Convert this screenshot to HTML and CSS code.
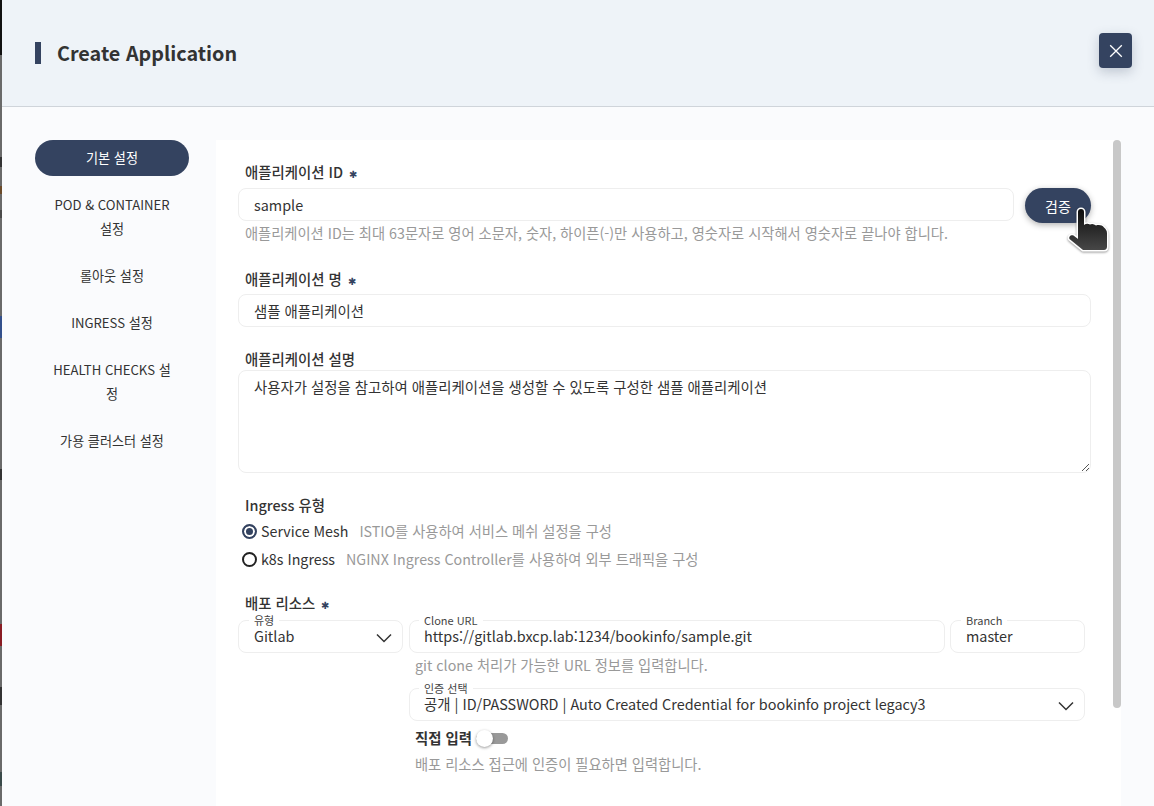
FILE: index.html
```html
<!DOCTYPE html>
<html lang="ko">
<head>
<meta charset="utf-8">
<title>Create Application</title>
<link rel="stylesheet" href="styles.css">
</head>
<body>
<div class="backdrop"></div>
<main class="dialog">
  <header class="dialog-head">
    <h1 class="title">Create Application</h1>
    <button class="close" type="button" aria-label="close">
      <svg width="14" height="14" viewBox="0 0 14 14"><path d="M1.2 1.2l11.6 11.6M12.8 1.2L1.2 12.8" fill="none" stroke="#fff" stroke-width="1.3"/></svg>
    </button>
  </header>
  <div class="dialog-body">
    <nav class="side">
      <a class="side-item active">기본 설정</a>
      <a class="side-item">POD &amp; CONTAINER 설정</a>
      <a class="side-item">롤아웃 설정</a>
      <a class="side-item">INGRESS 설정</a>
      <a class="side-item">HEALTH CHECKS 설정</a>
      <a class="side-item">가용 클러스터 설정</a>
    </nav>
    <section class="panel">
      <div class="form">
        <label class="lbl lbl-first">애플리케이션 ID <span class="req">✱</span></label>
        <div class="row-id">
          <div class="field grow">sample</div>
          <div class="verify-wrap">
            <button class="verify" type="button">검증</button>
            <svg class="cursor" width="50" height="52" viewBox="0 0 50 52">
              <defs><linearGradient id="hand" x1="0" y1="0" x2="0" y2="1"><stop offset="0" stop-color="#0c0c0c"/><stop offset="1" stop-color="#474747"/></linearGradient></defs>
              <path d="M16 7a3 3 0 0 1 6 0v13c2-1.500 4-1.500 6-.5 2-1 4-.5 6 1 3-1 6-.5 8 2 2 2 3 3 3 6v13c0 2-1 3.500-3 3.500H21L7.500 34c-1-2 1-4.500 4-3.500L16 34z" fill="url(#hand)" stroke="#fff" stroke-width="3" stroke-linejoin="round" paint-order="stroke"/>
            </svg>
          </div>
        </div>
        <p class="hint hint-id">애플리케이션 ID는 최대 63문자로 영어 소문자, 숫자, 하이픈(-)만 사용하고, 영숫자로 시작해서 영숫자로 끝나야 합니다.</p>

        <label class="lbl lbl-name">애플리케이션 명 <span class="req">✱</span></label>
        <div class="field">샘플 애플리케이션</div>

        <label class="lbl lbl-desc">애플리케이션 설명</label>
        <div class="area">사용자가 설정을 참고하여 애플리케이션을 생성할 수 있도록 구성한 샘플 애플리케이션
          <svg class="grip" width="8" height="8" viewBox="0 0 8 8"><path d="M1 8l7-7M5 8l3-3" stroke="#555" stroke-width="1" fill="none"/></svg>
        </div>

        <label class="lbl lbl-ing">Ingress 유형</label>
        <div class="radio-row r1"><span class="radio on"></span><span class="radio-text">Service Mesh</span><span class="radio-hint">ISTIO를 사용하여 서비스 메쉬 설정을 구성</span></div>
        <div class="radio-row r2"><span class="radio"></span><span class="radio-text">k8s Ingress</span><span class="radio-hint">NGINX Ingress Controller를 사용하여 외부 트래픽을 구성</span></div>

        <label class="lbl lbl-res">배포 리소스 <span class="req">✱</span></label>
        <div class="res-grid">
          <div class="res-type">
            <div class="field float sel"><span class="legend">유형</span><span class="value">Gitlab</span>
              <svg class="chev" width="16" height="10" viewBox="0 0 16 10"><path d="M1 1.500l7 7 7-7" fill="none" stroke="#333" stroke-width="1.500"/></svg>
            </div>
          </div>
          <div class="res-main">
            <div class="res-top">
              <div class="field float url"><span class="legend">Clone URL</span><span class="value">https://gitlab.bxcp.lab:1234/bookinfo/sample.git</span></div>
              <div class="field float branch"><span class="legend">Branch</span><span class="value">master</span></div>
            </div>
            <p class="hint hint-url">git clone 처리가 가능한 URL 정보를 입력합니다.</p>
            <div class="field float sel cred"><span class="legend">인증 선택</span><span class="value">공개 | ID/PASSWORD | Auto Created Credential for bookinfo project legacy3</span>
              <svg class="chev" width="16" height="10" viewBox="0 0 16 10"><path d="M1 1.500l7 7 7-7" fill="none" stroke="#333" stroke-width="1.500"/></svg>
            </div>
            <div class="direct"><strong>직접 입력</strong><span class="switch"><span class="knob"></span></span></div>
            <p class="hint hint-res">배포 리소스 접근에 인증이 필요하면 입력합니다.</p>
          </div>
        </div>
      </div>
      <div class="scrollbar"></div>
    </section>
  </div>
</main>
</body>
</html>
```
FILE: styles.css
```css
* { box-sizing: border-box; }
html, body { height: 100%; }
body {
  margin: 0;
  display: flex;
  height: 806px;
  overflow: hidden;
  font-family: "Noto Sans CJK KR", "Noto Sans", sans-serif;
  font-size: 14.4px;
  color: #333;
  background: #fafbfd;
}
.backdrop {
  flex: 0 0 2px;
  background: linear-gradient(
    #111 0 55px,
    #6a6a6a 55px 157px, #333 157px 167px,
    #6a6a6a 167px 186px, #6b4a2a 186px 194px,
    #6a6a6a 194px 210px, #4a4a4a 210px 218px,
    #6a6a6a 218px 316px, #33508c 316px 338px,
    #6a6a6a 338px 469px, #333 469px 480px,
    #6a6a6a 480px 624px, #8a1c24 624px 646px,
    #6a6a6a 646px 687px, #333 687px 705px,
    #6a6a6a 705px 772px, #3a4a4a 772px 786px,
    #6a6a6a 786px
  );
}
.dialog {
  flex: 1;
  min-width: 0;
  display: flex;
  flex-direction: column;
}
.dialog-head {
  flex: 0 0 107px;
  display: flex;
  align-items: flex-start;
  justify-content: space-between;
  background: #eef3f8;
  border-bottom: 1px solid #cfd4da;
  padding: 33px 22px 0 33px;
}
.title {
  margin: 9px 0 0;
  padding-left: 16px;
  border-left: 6px solid #344360;
  font-size: 19.8px;
  line-height: 22px;
  font-weight: 700;
  color: #333;
}
.close {
  width: 33px;
  height: 35px;
  padding: 0;
  border: 0;
  border-radius: 4px;
  background: #344360;
  box-shadow: 0 4px 12px rgba(52, 67, 96, .25);
  display: flex;
  align-items: center;
  justify-content: center;
}
.dialog-body {
  flex: 1;
  min-height: 0;
  display: flex;
  padding: 33px 33px 0 33px;
}
.side {
  flex: 0 0 154px;
  margin-right: 27px;
  display: flex;
  flex-direction: column;
  gap: 11px;
  text-align: center;
}
.side-item {
  display: block;
  padding: 6px 16px;
  font-size: 13.12px;
  line-height: 24px;
  color: #333;
}
.side-item.active {
  background: #344360;
  color: #fff;
  border-radius: 18px;
}
.panel {
  flex: 1;
  min-width: 0;
  display: flex;
  background: #fff;
}
.form {
  flex: 1;
  min-width: 0;
  padding: 22px 22px 0 22px;
}
.scrollbar {
  flex: 0 0 8px;
  height: 568px;
  background: #c8c8c8;
  border-radius: 4px;
}
.lbl {
  display: block;
  height: 20px;
  margin-left: 7px;
  font-size: 14.4px;
  line-height: 20px;
  font-weight: 500;
  color: #333;
}
.req {
  margin-left: 2px;
  font-size: 10px;
  line-height: 1;
  color: #344360;
}
.row-id { display: flex; gap: 11px; margin-top: 6px; }
.grow { flex: 1; }
.field {
  position: relative;
  height: 33px;
  padding: 0 15px;
  border: 1px solid #eeeeee;
  border-radius: 8px;
  font-size: 14.4px;
  line-height: 31px;
  color: #333;
  background: #fff;
  white-space: nowrap;
}
.verify-wrap { position: relative; }
.verify {
  width: 66px;
  height: 35px;
  padding: 0;
  border: 0;
  border-radius: 18px;
  background: #344360;
  color: #fff;
  font: inherit;
  font-size: 14px;
  box-shadow: 0 2px 6px rgba(0, 0, 0, .3);
}
.cursor {
  position: absolute;
  left: 37px;
  top: 17px;
  filter: drop-shadow(0 1px 1px rgba(0, 0, 0, .4));
}
.hint {
  margin: 0;
  font-size: 14.28px;
  line-height: 20px;
  color: #999;
}
.hint-id { margin: 0 0 0 7px; }
.lbl-name { margin-top: 26px; margin-bottom: 5px; }
.lbl-desc { margin-top: 22px; margin-bottom: 1px; }
.area {
  position: relative;
  height: 103px;
  padding: 0 15px;
  border: 1px solid #eeeeee;
  border-radius: 8px;
  font-size: 14.4px;
  line-height: 32px;
  color: #333;
}
.grip { position: absolute; right: 1px; bottom: 1px; }
.lbl-ing { margin-top: 22px; }
.radio-row {
  display: flex;
  align-items: center;
  height: 28px;
  margin-left: 4px;
}
.r1 { margin-top: 2px; }
.radio {
  width: 15px;
  height: 15px;
  border: 2px solid #222;
  border-radius: 50%;
  background: #fff;
  margin-right: 4px;
  flex: none;
}
.radio.on { border-color: #344360; background: #344360; box-shadow: inset 0 0 0 2px #fff; }
.radio-text { margin-bottom: 2px; font-size: 14.28px; color: #333; }
.radio-hint { margin: 0 0 2px 11px; font-size: 14.28px; color: #999; }
.lbl-res { margin-top: 20px; }
.res-grid { display: flex; gap: 6px; margin-top: 7px; }
.res-type { flex: 0 0 165px; }
.res-main { flex: 1; min-width: 0; }
.res-top { display: flex; gap: 5px; }
.url { flex: 1; }
.branch { flex: 0 0 135px; margin-right: 6px; }
.float { padding-left: 14px; }
.res-type .float, .branch { padding-left: 15px; }
.value { position: relative; top: -1px; }
.legend {
  position: absolute;
  left: 9px;
  top: -8px;
  padding: 0 5px;
  background: #fff;
  font-size: 11px;
  line-height: 14px;
  color: #444;
}
.res-type .legend, .branch .legend { left: 10px; }
.sel { padding-right: 36px; }
.chev { position: absolute; right: 10px; top: 12px; }
.hint-url { margin: 2px 0 0 6px; }
.cred { margin: 13px 6px 0 0; }
.direct {
  display: flex;
  align-items: center;
  margin: 5px 0 0 6px;
  height: 22px;
}
.direct strong { font-size: 14.4px; font-weight: 700; color: #333; }
.switch {
  position: relative;
  width: 32px;
  height: 11px;
  margin: 3px 0 0 4px;
  border-radius: 6px;
  background: #999;
}
.knob {
  position: absolute;
  left: 0;
  top: -3px;
  width: 17px;
  height: 17px;
  border-radius: 50%;
  background: #fff;
  box-shadow: 0 1px 3px rgba(0, 0, 0, .4);
}
.hint-res { margin: 6px 0 0 6px; }
```
